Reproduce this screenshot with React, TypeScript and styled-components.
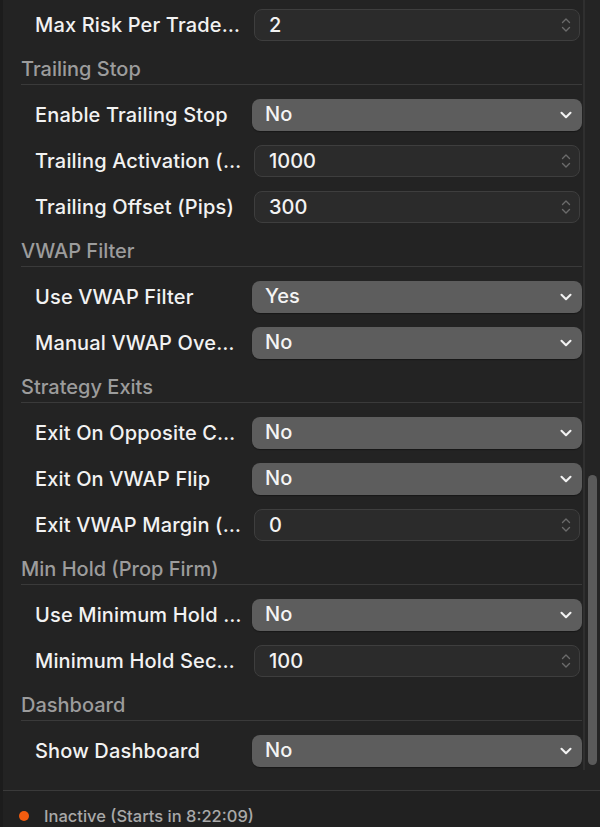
import React from 'react';
import styled, { createGlobalStyle } from 'styled-components';

type Field =
    | { kind: 'select'; label: string; value: string }
    | { kind: 'number'; label: string; value: string };

type Section = { title?: string; fields: Field[] };

const sections: Section[] = [
    {
        fields: [{ kind: 'number', label: 'Max Risk Per Trade (%)', value: '2' }],
    },
    {
        title: 'Trailing Stop',
        fields: [
            { kind: 'select', label: 'Enable Trailing Stop', value: 'No' },
            { kind: 'number', label: 'Trailing Activation (Pips)', value: '1000' },
            { kind: 'number', label: 'Trailing Offset (Pips)', value: '300' },
        ],
    },
    {
        title: 'VWAP Filter',
        fields: [
            { kind: 'select', label: 'Use VWAP Filter', value: 'Yes' },
            { kind: 'select', label: 'Manual VWAP Override', value: 'No' },
        ],
    },
    {
        title: 'Strategy Exits',
        fields: [
            { kind: 'select', label: 'Exit On Opposite Crossover', value: 'No' },
            { kind: 'select', label: 'Exit On VWAP Flip', value: 'No' },
            { kind: 'number', label: 'Exit VWAP Margin (Pips)', value: '0' },
        ],
    },
    {
        title: 'Min Hold (Prop Firm)',
        fields: [
            { kind: 'select', label: 'Use Minimum Hold Time', value: 'No' },
            { kind: 'number', label: 'Minimum Hold Seconds', value: '100' },
        ],
    },
    {
        title: 'Dashboard',
        fields: [{ kind: 'select', label: 'Show Dashboard', value: 'No' }],
    },
];

const Chevron = () => (
    <svg width="12" height="8" viewBox="0 0 12 8" fill="none">
        <path
            d="M1.5 1.8 L6 6.2 L10.5 1.8"
            stroke="#f2f2f2"
            strokeWidth="2.1"
            strokeLinecap="round"
            strokeLinejoin="round"
        />
    </svg>
);

const Stepper = () => (
    <svg width="10" height="18" viewBox="0 0 10 18" fill="none">
        <path
            d="M1.5 6.5 L5 3 L8.5 6.5 M1.5 11.5 L5 15 L8.5 11.5"
            stroke="#6b6b6b"
            strokeWidth="1.4"
            strokeLinecap="round"
            strokeLinejoin="round"
        />
    </svg>
);

const App = () => {
    return (
        <>
            <GlobalStyle />
            <Window>
                <Main>
                    <Content>
                        {sections.map((section, i) => (
                            <Group key={i}>
                                {section.title && <SectionTitle>{section.title}</SectionTitle>}
                                {section.fields.map((field) => (
                                    <Row key={field.label}>
                                        <Label>{field.label}</Label>
                                        {field.kind === 'select' ? (
                                            <SelectBox>
                                                <span>{field.value}</span>
                                                <Chevron />
                                            </SelectBox>
                                        ) : (
                                            <NumberBox>
                                                <span>{field.value}</span>
                                                <Stepper />
                                            </NumberBox>
                                        )}
                                    </Row>
                                ))}
                            </Group>
                        ))}
                    </Content>
                    <Track>
                        <Thumb />
                    </Track>
                </Main>
                <Footer>
                    <Dot />
                    <Status>Inactive (Starts in 8:22:09)</Status>
                </Footer>
            </Window>
        </>
    );
};

export default App;

const GlobalStyle = createGlobalStyle`
    html, body {
        margin: 0;
        padding: 0;
        background: #232323;
    }
    * {
        box-sizing: border-box;
    }
`;

const Window = styled.div`
    width: 600px;
    height: 827px;
    display: flex;
    flex-direction: column;
    background: #232323;
    border-left: 3px solid #1c1c1c;
    font-family: Inter, 'Noto Sans', 'Liberation Sans', sans-serif;
    overflow: hidden;
`;

const Main = styled.div`
    display: flex;
    height: 770px;
    flex-shrink: 0;
`;

const Content = styled.div`
    flex: 1;
    padding: 9px 0 0 18px;
    overflow: hidden;
`;

const Group = styled.div`
    display: flex;
    flex-direction: column;
`;

const SectionTitle = styled.div`
    height: 30px;
    margin-top: 14px;
    border-bottom: 1px solid #3a3a3a;
    color: #9c9c9c;
    font-size: 20px;
    font-weight: 500;
    line-height: 28px;
`;

const Row = styled.div`
    display: flex;
    align-items: center;
    height: 32px;
    margin-top: 14px;

    &:first-child {
        margin-top: 0;
    }
`;

const Label = styled.div`
    width: 231px;
    flex-shrink: 0;
    padding: 0 10px 0 14px;
    color: #f2f2f2;
    font-size: 20px;
    font-weight: 500;
    letter-spacing: 0.15px;
    white-space: nowrap;
    overflow: hidden;
    text-overflow: ellipsis;
`;

const SelectBox = styled.div`
    flex: 1;
    height: 32px;
    display: flex;
    align-items: center;
    justify-content: space-between;
    padding: 0 10px 0 13px;
    background: #5d5d5d;
    border-radius: 8px;
    box-shadow: 0 1px 1px rgba(0, 0, 0, 0.35);
    color: #f4f4f4;
    font-size: 20px;
    font-weight: 500;

    span {
        margin-top: -3px;
    }
`;

const NumberBox = styled.div`
    flex: 1;
    height: 32px;
    margin: 0 2px;
    display: flex;
    align-items: center;
    justify-content: space-between;
    padding: 0 8px 0 14px;
    background: #2b2b2b;
    border: 1px solid #3e3e3e;
    border-radius: 8px;
    color: #f2f2f2;
    font-size: 20px;
    font-weight: 500;
`;

const Track = styled.div`
    width: 17px;
    flex-shrink: 0;
    margin-left: 1px;
    border-left: 2px solid #2f2f2f;
    background: #242424;
    display: flex;
    flex-direction: column;
    justify-content: flex-end;
    padding: 0 2px 5px 3px;
`;

const Thumb = styled.div`
    height: 290px;
    width: 9px;
    border-radius: 5px;
    background: #5a5a5a;
`;

const Footer = styled.div`
    margin-top: 20px;
    flex: 1;
    display: flex;
    align-items: center;
    align-self: stretch;
    gap: 15px;
    height: 20px;
    padding: 14px 0 0 16px;
    border-top: 1px solid #3a3a3a;
    background: #212121;
`;

const Dot = styled.span`
    width: 10px;
    height: 10px;
    border-radius: 50%;
    background: #f25c0f;
`;

const Status = styled.span`
    color: #a9a9a9;
    font-size: 16.5px;
    font-weight: 500;
    line-height: 20px;
`;
